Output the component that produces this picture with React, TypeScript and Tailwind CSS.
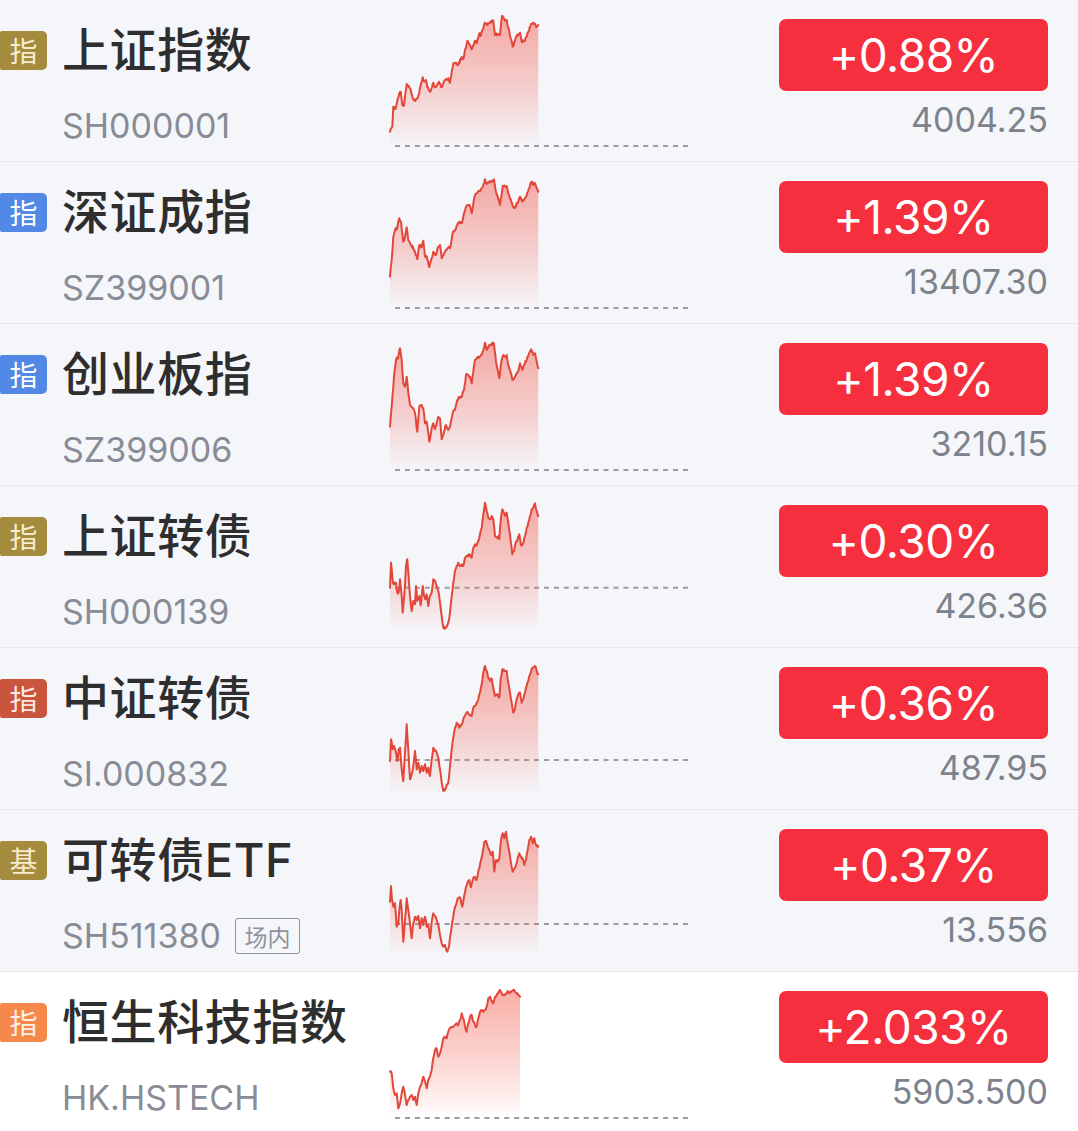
import React from "react";

type P = [number, number];

const C1: P[] = [[1,131.7],[3.3,126.7],[4.3,106.7],[6.7,108.3],[10.3,93.3],[11.7,91.7],[13.3,105],[14.7,106],[17.7,84],[21,88.3],[23.7,98.3],[26.3,101],[28.7,98.3],[33.7,77.3],[35.3,81.7],[37,80],[38.3,87.3],[41,91.7],[44.3,82.7],[46,87.3],[50,81.7],[52.7,87.3],[56,80],[59.3,78.3],[61,82.7],[64.3,63.3],[67,62.7],[69.3,65],[72.7,56.7],[74.3,59.3],[78.3,40.7],[81,45],[82.7,49.3],[86,40.7],[87.7,43.3],[90.3,33.3],[91.7,36],[95.7,22.7],[98.3,25],[101,22.7],[104.3,20.7],[106,35],[108.7,34],[111,35],[113,16],[114.3,18.3],[116,20.7],[117.7,20],[120.3,31.7],[123.7,46.7],[126,40.7],[127.7,36],[131,32.7],[132.7,41.7],[136,40.7],[139.3,31.7],[142,24],[145,24],[147.7,26.7],[149.3,25]];

const C2: P[] = [[1,114.7],[2.7,98],[4.3,74.7],[6,68],[8.3,65.7],[10.3,56.3],[12,59.7],[14.3,79.7],[16,74.7],[17.7,65.3],[19.3,78],[21.7,83],[24.3,86.3],[26,89.7],[28.3,97.3],[30.3,83],[32.7,85.3],[34.3,78.7],[36,94.7],[37.7,94],[40.3,105.3],[42.7,96.3],[44.3,89.7],[47,93],[49.3,84.7],[51,83],[52.7,96.3],[55,91.3],[57,88],[59.3,85.3],[61,86.3],[63.7,70.7],[66,68],[68.3,63],[70.3,59.7],[72.7,61.3],[74.3,54.7],[77,44.7],[78.7,43],[81,44],[82.7,51.3],[86,33],[87.7,31.3],[90.3,28.7],[92,27.3],[94.3,23],[96,17.3],[97.7,22],[100.3,20.7],[102.7,18.7],[105,17.3],[107,29.7],[108.7,34.7],[111,43],[113.7,24],[116,24.7],[117.7,24],[119.3,31.3],[121.7,37.3],[123.7,44.7],[126,45.3],[129.3,39.7],[131,34.7],[133.3,39.7],[135,38],[137.7,33],[140.3,26.3],[142.3,19.7],[144.3,23],[146,21.3],[147.7,26.3],[149.3,29.7]];

const C3: P[] = [[1,102.7],[2.7,82.7],[5,52.7],[7,36],[9.3,32.7],[11,24.3],[12.7,36],[14.3,59.3],[16,62.7],[17.7,52.7],[19.3,69.3],[21,81],[24.3,84.3],[26,89.3],[28.3,107.7],[30.3,82.7],[32.7,81],[34.3,84.3],[36,99.3],[37.7,97.7],[40.3,117.7],[42.7,104.3],[44.3,99.3],[46,105.3],[49.3,92.7],[51,94.3],[52.7,115.3],[55,107.7],[57,101],[59.3,106],[61,102.7],[63.7,89.3],[66,86],[68.3,76],[71,72.7],[72.7,73.3],[75,66],[77,51],[79.3,51],[81,52.7],[82.7,59.3],[86,36],[87.7,34.3],[90.3,32.7],[92,31],[94.3,26],[96,18.7],[97.7,26],[100.3,21],[102.7,19.3],[105,20],[107,37.7],[108.7,46],[110.3,54.3],[112.7,36],[114.3,31],[116,32.7],[117.7,31],[119.3,41],[121,46],[123.7,56],[126,52.7],[129.3,47.7],[131,39.3],[133.3,46],[135,41],[137.7,36],[140.3,29.3],[142.3,25.3],[144.3,31],[146,29.3],[147.7,37.7],[149.3,44.3]];

const C4: P[] = [[1,101.7],[2,76.7],[3.7,95],[5,98.3],[7,96.7],[8.3,106.7],[9.7,106],[11,93.3],[12.7,110],[13.7,126.7],[15.3,110],[17,80],[18.3,73.3],[19.7,91.7],[21,110],[22.7,125],[24.3,115],[26,118.3],[27,100],[28.3,115],[30.3,110],[31.7,119.3],[33.7,100],[35,110],[36.3,113.3],[37.7,108.3],[39.3,120],[41,110],[42.7,106.7],[44.3,93.3],[46,95],[47.7,100],[49.3,105],[51,116.7],[52.7,130],[54.3,141.7],[57,141.7],[59.3,136.7],[61,126.7],[62.7,110],[64.3,96.7],[66,85],[67.7,80],[69.3,76.7],[71,80],[72.7,78.3],[74.3,80],[76,71.7],[77.7,70],[80.3,68.3],[82.7,71.7],[84.3,61.7],[86,58.3],[87.7,59.3],[89.3,55],[91,48.3],[92.7,41.7],[94.3,28.3],[96,16.7],[97.7,25],[99.3,31.7],[101,33.3],[102.7,30],[104.3,33.3],[106,50],[107.7,51.7],[109.3,50],[110.3,53.3],[111.7,35],[113.3,23.3],[116,30],[117.7,26.7],[119.3,36.7],[121,48.3],[123.3,68.3],[125,65],[126.7,56.7],[128.3,55],[130.3,48.3],[132,59.3],[133.7,58.3],[136,50],[137.7,41.7],[139.3,36.7],[141,30],[142.7,23.3],[144.3,21.7],[146,17.3],[147.7,25],[149.3,30]];

const C5: P[] = [[1,113],[2,91.3],[3.7,101.3],[5,98],[7,104.7],[8.3,113],[9.7,101.3],[11,99.7],[12.7,121.3],[14.3,133],[16,104.7],[17.7,76.3],[19.3,101.3],[21,131.3],[22.7,126.3],[24.3,118],[26,103],[27.7,121.3],[29.3,114.7],[31,124.7],[32.7,118],[34.3,123],[36,116.3],[37.7,124.7],[39.3,119.7],[41,128],[42.7,111.3],[44.3,99.7],[46,103],[47.7,104.7],[49.3,109.7],[51,121.3],[52.7,134.7],[54.3,143],[57,139.7],[59.3,134.7],[61,118],[62.7,101.3],[64.3,89.7],[66,79.7],[67.7,74.7],[69.3,76.3],[70.3,79.7],[72.7,76.3],[74.3,71.3],[76,68],[77.7,64.7],[80.3,66.3],[82.7,68],[84.3,59.7],[86,58],[87.7,54.7],[89.3,51.3],[91,44.7],[92.7,36.3],[94.3,24.7],[96,18],[97.7,23],[99.3,29.7],[101,33],[102.7,30.7],[104.3,39.7],[106,48],[107.7,46.3],[110.3,49.7],[111.7,31.3],[113.3,21.3],[116,23],[117.7,23],[119.3,34.7],[121,44.7],[122.7,54.7],[124.3,64.7],[126,61.3],[127.7,51.3],[129.3,46.3],[131,44.7],[132.7,54.7],[134.3,51.3],[136,44.7],[137.7,38],[139.3,33],[141,26.3],[142.7,20.7],[144.3,19.7],[146,18],[147.7,23],[149.3,26.3]];

const C6: P[] = [[1,91.7],[2,76],[3,90],[4.3,96.7],[6,93.3],[7.7,116.7],[9.3,113.3],[10.3,100],[11.7,90],[12.7,100],[14.3,131.7],[16,110],[17.7,88.3],[19.3,100],[21,113.3],[22.7,128.3],[24.3,113.3],[26,106.7],[27.7,110],[29.3,106],[31,118.3],[32.7,108.3],[34.3,115],[36,106.7],[37.7,116.7],[39.3,115],[41,128.3],[42.7,111.7],[44.3,103.3],[46,106],[47.7,110],[49.3,115],[51,125],[52.7,133.3],[54.3,136.7],[56,135],[58.3,141.7],[60,136.7],[61.7,123.3],[63.7,110],[65.3,100],[67,95],[68.7,88.3],[70.3,87.3],[71.7,89.3],[73.3,96.7],[75,86.7],[77,76.7],[78.7,71.7],[80.3,70],[82,77.3],[83.7,70],[85.3,66.7],[87,70],[88.7,65],[90.3,58.3],[92,50],[93.7,41.7],[95.3,31.7],[97,30.7],[98.7,36.7],[100.3,40],[102,45],[103.7,41.7],[105.3,61.7],[107,50],[108.7,51.7],[110.3,48.3],[112,30],[113.7,23.3],[115.3,28.3],[117,21.7],[118.7,33.3],[120.3,41.7],[122,53.3],[123.7,61.7],[125.3,58.3],[127,55],[128.7,48.3],[130.3,43.3],[132,46.7],[133.7,48.3],[135.3,55],[137,50],[138.7,40],[140.3,30],[142,26.7],[143.7,33.3],[145.3,28.3],[147,35],[149.3,36.7]];

const C7: P[] = [[1,99.7],[2.7,101.3],[4.3,116.3],[6,123],[7.7,121.3],[9.3,136.3],[11,131.3],[12.7,121.3],[14.3,114.7],[16,123],[17.7,133],[19.3,128],[21,124.7],[22.7,123],[24.3,128],[26,124.7],[27.7,133],[29.3,121.3],[31,114.7],[32.7,111.3],[34.3,104.7],[36,109.7],[37.7,116.3],[39.3,108],[41,104.7],[42.7,98],[44.3,86.3],[46,78],[47.7,76.3],[49.3,84.7],[51,81.3],[52.7,74.7],[54.3,66.3],[56,64.7],[57.7,66.3],[59.3,59.7],[61,56.3],[62.7,55.3],[64.3,54.7],[66,53],[67.7,51.3],[69.3,53],[71,48],[72.7,41.3],[74.3,46.3],[76,54.7],[77.7,59.7],[79.3,51.3],[81,44.7],[82.7,43],[84.3,49.7],[86,53],[87.7,54.7],[89.3,46.3],[91,39.7],[92.7,38],[94.3,39.7],[96,38],[97.7,34.7],[99.3,26.3],[101,24.7],[102.7,29.7],[104.3,31.3],[106,24.7],[107.7,23],[109.3,21.3],[111,18],[112.7,21.3],[114.3,23],[116,23],[117.7,21.3],[119.3,19.7],[121,20.7],[122.7,19.7],[124.3,18],[126,19.7],[127.7,21.3],[129.3,23],[131,24.7]];

type Row = {
  badge: string;
  badgeCls: string;
  name: string;
  code: string;
  tag?: string;
  pct: string;
  price: string;
  pts: P[];
  dash: number;
  bg: string;
  last?: boolean;
};

const rows: Row[] = [
  { badge: "指", badgeCls: "bg-[#a58b3e] text-[#f6edcf]", name: "上证指数", code: "SH000001", pct: "+0.88%", price: "4004.25", pts: C1, dash: 146, bg: "bg-[#f5f6fa]" },
  { badge: "指", badgeCls: "bg-[#5288e6] text-white", name: "深证成指", code: "SZ399001", pct: "+1.39%", price: "13407.30", pts: C2, dash: 146, bg: "bg-[#f5f6fa]" },
  { badge: "指", badgeCls: "bg-[#5288e6] text-white", name: "创业板指", code: "SZ399006", pct: "+1.39%", price: "3210.15", pts: C3, dash: 146, bg: "bg-[#f5f6fa]" },
  { badge: "指", badgeCls: "bg-[#a58b3e] text-[#f6edcf]", name: "上证转债", code: "SH000139", pct: "+0.30%", price: "426.36", pts: C4, dash: 101.7, bg: "bg-[#f5f6fa]" },
  { badge: "指", badgeCls: "bg-[#c9553c] text-[#fde9e2]", name: "中证转债", code: "SI.000832", pct: "+0.36%", price: "487.95", pts: C5, dash: 112, bg: "bg-[#f5f6fa]" },
  { badge: "基", badgeCls: "bg-[#a58b3e] text-[#f6edcf]", name: "可转债ETF", code: "SH511380", tag: "场内", pct: "+0.37%", price: "13.556", pts: C6, dash: 114, bg: "bg-[#f5f6fa]" },
  { badge: "指", badgeCls: "bg-[#f5884a] text-[#fff1e6]", name: "恒生科技指数", code: "HK.HSTECH", pct: "+2.033%", price: "5903.500", pts: C7, dash: 146, bg: "bg-white", last: true },
];

function buildPoints(pts: P[], seed: number): P[] {
  let s = seed;
  const rnd = () => {
    s = (s * 16807) % 2147483647;
    return s / 2147483647;
  };
  const out: P[] = [];
  for (let i = 0; i < pts.length - 1; i++) {
    const [x0, y0] = pts[i];
    const [x1, y1] = pts[i + 1];
    const n = Math.max(1, Math.round((x1 - x0) / 0.7));
    for (let k = 0; k < n; k++) {
      const t = k / n;
      const j = k === 0 ? 0 : (rnd() - 0.5) * 2.8;
      out.push([x0 + (x1 - x0) * t, y0 + (y1 - y0) * t + j]);
    }
  }
  out.push(pts[pts.length - 1]);
  return out;
}

function Spark({ pts, dash, id }: { pts: P[]; dash: number; id: number }) {
  const p = buildPoints(pts, 1234 + id * 977);
  const line = p.map((q, i) => `${i ? "L" : "M"}${q[0].toFixed(2)} ${q[1].toFixed(2)}`).join(" ");
  const first = p[0];
  const last = p[p.length - 1];
  const fill = `${line} L${last[0].toFixed(2)} 143 L${first[0].toFixed(2)} 143 Z`;
  const gid = `g${id}`;
  return (
    <svg width={300} height={161} viewBox="0 0 300 161" className="shrink-0 block">
      <defs>
        <linearGradient id={gid} x1="0" y1="15" x2="0" y2="143" gradientUnits="userSpaceOnUse">
          <stop offset="0" stopColor="#f2594a" stopOpacity="0.5" />
          <stop offset="0.6" stopColor="#f2594a" stopOpacity="0.24" />
          <stop offset="1" stopColor="#f2594a" stopOpacity="0.02" />
        </linearGradient>
      </defs>
      <line x1={6} y1={dash} x2={299} y2={dash} stroke="#9c9c9c" strokeWidth={2} strokeDasharray="5 4.93" />
      <path d={fill} fill={`url(#${gid})`} />
      <path d={line} fill="none" stroke="#e3473a" strokeWidth={2} strokeLinejoin="round" strokeLinecap="round" />
    </svg>
  );
}

const LATIN = "font-['Inter','Noto_Sans_CJK_SC',sans-serif]";

export default function App() {
  return (
    <div className={`w-[1078px] ${LATIN}`}>
      {rows.map((r, i) => (
        <div
          key={i}
          className={`flex ${r.last ? "h-[159px]" : "h-[162px] border-b border-[#e6e7eb]"} ${r.bg}`}
        >
          <div className="w-[389px] shrink-0 flex flex-col">
            <div className="mt-[20px] h-[60px] flex items-center">
              <span
                className={`w-[47px] h-[39px] rounded-r-[5px] rounded-l-[2px] flex items-center justify-center text-[28px] leading-none font-['Noto_Sans_CJK_SC',sans-serif] ${r.badgeCls}`}
              >
                {r.badge}
              </span>
              <span className="ml-[15px] text-[47px] leading-[60px] font-medium text-[#2e2e2e] tracking-[0.6px]">
                {r.name}
              </span>
            </div>
            <div className="mt-[26px] h-[40px] flex items-center pl-[62px]">
              <span className="text-[34px] leading-[40px] text-[#878c97]">{r.code}</span>
              {r.tag && (
                <span className="ml-[14px] w-[65px] h-[36px] border-[1.5px] border-[#8d929c] rounded-[3px] flex items-center justify-center text-[23px] leading-none text-[#8d929c] font-['Noto_Sans_CJK_SC',sans-serif]">
                  {r.tag}
                </span>
              )}
            </div>
          </div>
          <Spark pts={r.pts} dash={r.dash} id={i} />
          <div className="flex-1 flex flex-col items-end pr-[30px]">
            <div className="mt-[19px] w-[269px] h-[72px] rounded-[7px] bg-[#f52f3d] flex items-center justify-center text-white text-[46px] leading-none tracking-[-0.5px]">
              {r.pct}
            </div>
            <div className="mt-[9px] h-[40px] flex items-center text-[34px] leading-[40px] text-[#7d828d]">
              {r.price}
            </div>
          </div>
        </div>
      ))}
    </div>
  );
}
